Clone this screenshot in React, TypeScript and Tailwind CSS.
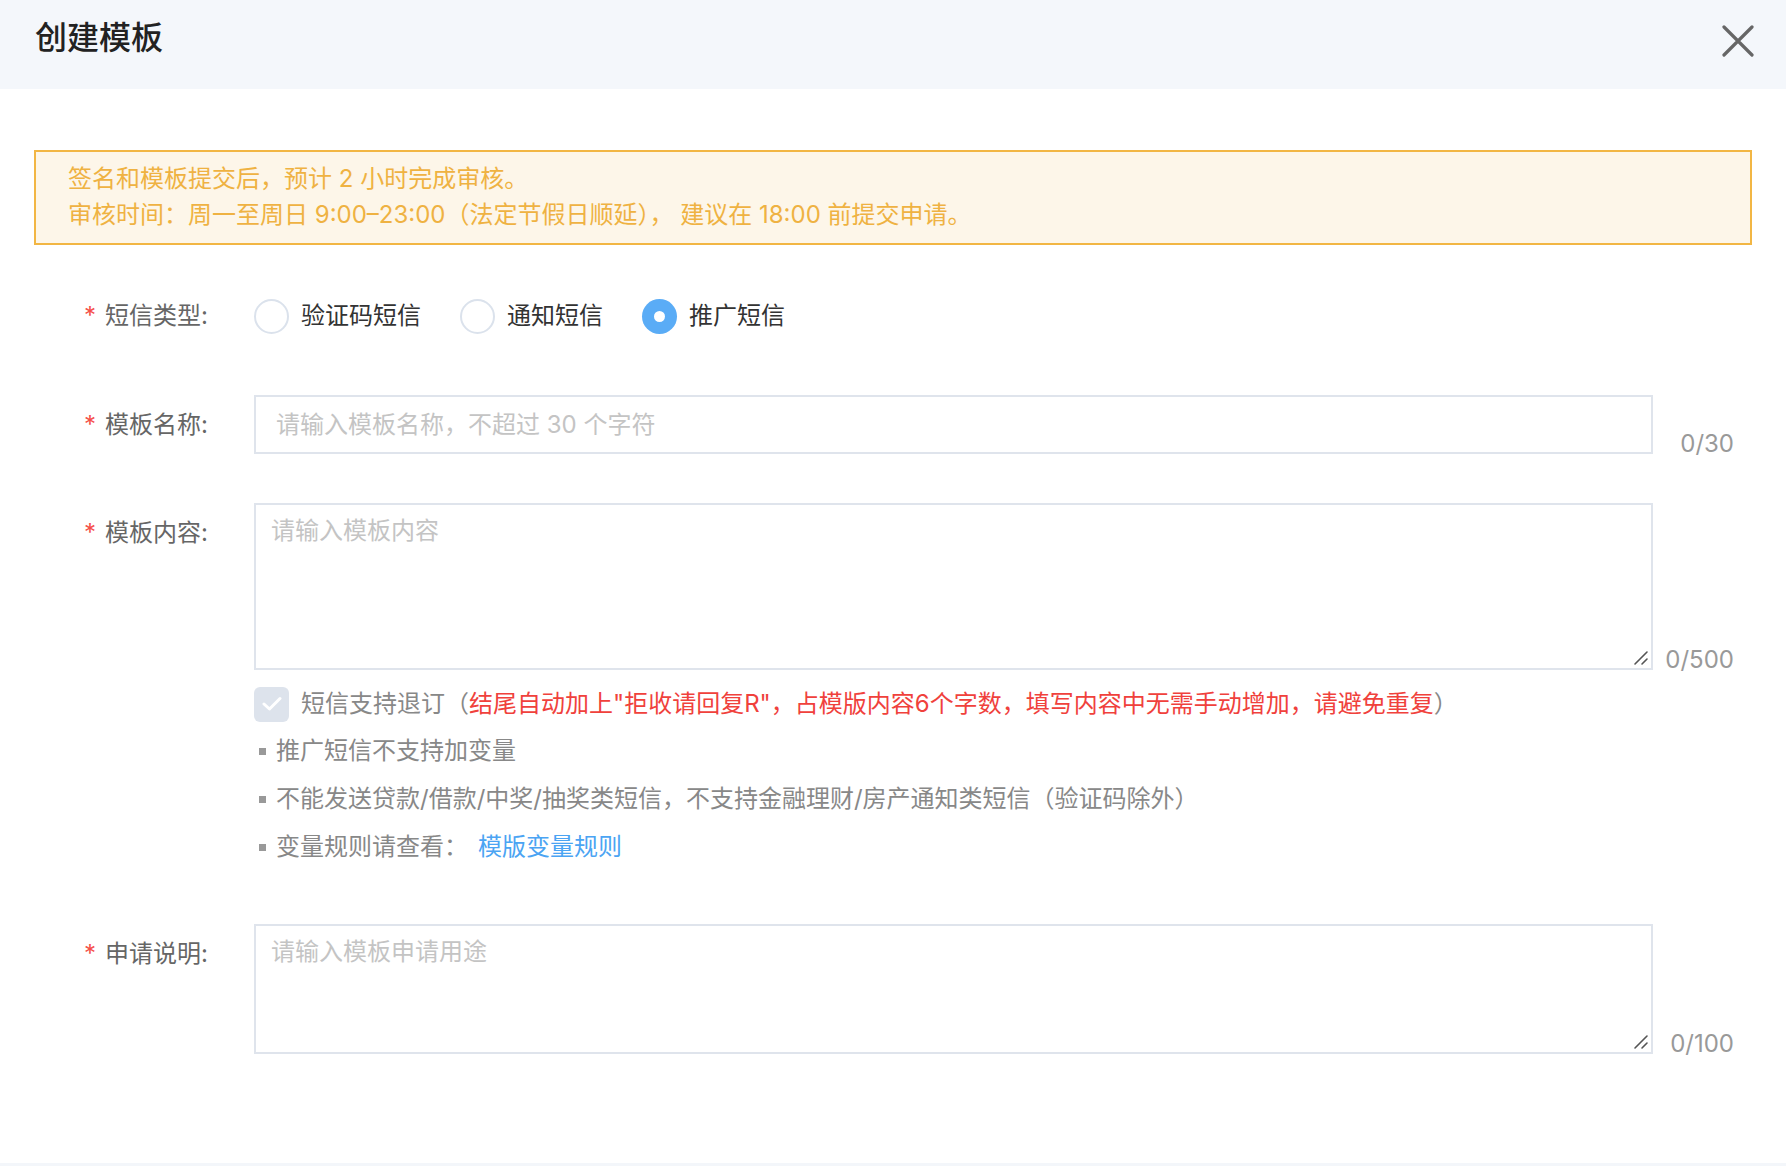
import { useState } from "react";

const FONT = "font-['Inter','Noto_Sans_CJK_SC',sans-serif]";

interface FieldRowProps {
  label: string;
  children: React.ReactNode;
  counter?: string;
  className?: string;
}

const Label = ({ label }: { label: string }) => (
  <div className="flex w-[170px] shrink-0 items-center gap-[9px] pt-[12px] text-[24px] leading-[36px] text-[#666]">
    <span className="text-[#f5504a]">*</span>
    <span>{label}:</span>
  </div>
);

const FieldRow = ({ label, children, counter, className = "" }: FieldRowProps) => (
  <div className={`flex items-start ${className}`}>
    <Label label={label} />
    <div className="flex-1">{children}</div>
    <div className="-mb-[2px] w-[81px] shrink-0 self-end text-right text-[24px] leading-none text-[#999]">
      {counter}
    </div>
  </div>
);

// textarea with the grip drawn the way the reference shows it
const Area = ({ placeholder, height }: { placeholder: string; height: string }) => (
  <div className="relative">
    <textarea
      placeholder={placeholder}
      className={`block ${height} w-full resize-none border-2 border-[#dfe4ec] px-[15px] pt-[8px] text-[24px] leading-[36px] text-[#333] outline-none placeholder:text-[#c4c4c4]`}
    />
    <svg className="absolute bottom-[4px] right-[4px]" width="16" height="16" viewBox="0 0 16 16" fill="none" stroke="#555" strokeWidth="1.6" strokeLinecap="round">
      <path d="M2 14 L14 2 M9 14 L14 9" />
    </svg>
  </div>
);

const Radio = ({ label, checked, onClick }: { label: string; checked: boolean; onClick: () => void }) => (
  <button onClick={onClick} className="mr-[39px] flex items-center gap-[12px]">
    {checked ? (
      <span className="flex h-[35px] w-[35px] items-center justify-center rounded-full bg-[#5aacf6]">
        <span className="h-[11px] w-[11px] rounded-full bg-white" />
      </span>
    ) : (
      <span className="h-[35px] w-[35px] rounded-full border-2 border-[#dbe2ec] bg-white" />
    )}
    <span className="text-[24px] leading-none text-[#333]">{label}</span>
  </button>
);

const Bullet = ({ children }: { children: React.ReactNode }) => (
  <div className="flex h-[48px] items-center text-[24px] text-[#888]">
    <span className="ml-[5px] mr-[10px] h-[7px] w-[7px] bg-[#999]" />
    {children}
  </div>
);

export default function App() {
  const [type, setType] = useState("promo");

  return (
    <div className={`flex min-h-[1166px] flex-col bg-white ${FONT}`}>
      {/* Header */}
      <div className="flex h-[89px] items-start justify-between bg-[#f4f7fb] pl-[35px] pr-[32px]">
        <h1 className="pt-[22px] text-[32px] leading-[32px] font-medium text-[#222]">创建模板</h1>
        <button className="mt-[25px]">
          <svg width="32" height="32" viewBox="0 0 32 32" fill="none" stroke="#666" strokeWidth="3.2" strokeLinecap="round">
            <path d="M2 2 L30 30 M30 2 L2 30" />
          </svg>
        </button>
      </div>

      {/* Notice */}
      <div className="px-[34px] pt-[61px]">
        <div className="h-[95px] border-2 border-[#f2b644] bg-[#fdf6e9] pl-[32px] pt-[9px] text-[24px] leading-[36px] text-[#efb242]">
          <p>签名和模板提交后，预计 2 小时完成审核。</p>
          <p>审核时间：周一至周日 9:00–23:00（法定节假日顺延）， 建议在 18:00 前提交申请。</p>
        </div>
      </div>

      {/* Form */}
      <div className="pl-[84px] pr-[52px]">
        <div className="mt-[53px] flex items-center">
          <div className="flex w-[170px] shrink-0 items-center gap-[9px] text-[24px] text-[#666]">
            <span className="text-[#f5504a]">*</span>
            <span>短信类型:</span>
          </div>
          <Radio label="验证码短信" checked={type === "code"} onClick={() => setType("code")} />
          <Radio label="通知短信" checked={type === "notice"} onClick={() => setType("notice")} />
          <Radio label="推广短信" checked={type === "promo"} onClick={() => setType("promo")} />
        </div>

        <FieldRow label="模板名称" counter="0/30" className="mt-[61px]">
          <input
            placeholder="请输入模板名称，不超过 30 个字符"
            className="block h-[59px] w-full border-2 border-[#dfe4ec] px-[20px] text-[24px] text-[#333] outline-none placeholder:text-[#c4c4c4]"
          />
        </FieldRow>

        <FieldRow label="模板内容" counter="0/500" className="mt-[49px]">
          <Area placeholder="请输入模板内容" height="h-[167px]" />
        </FieldRow>

        <div className="ml-[170px]">
          <div className="mt-[16px] flex items-center gap-[12px] text-[24px]">
            <span className="flex h-[35px] w-[35px] items-center justify-center rounded-[6px] bg-[#dde3ec]">
              <svg width="20" height="16" viewBox="0 0 20 16" fill="none" stroke="#fff" strokeWidth="3" strokeLinecap="round" strokeLinejoin="round">
                <path d="M2 8 L7.5 13 L18 2.5" />
              </svg>
            </span>
            <span className="text-[#888]">
              短信支持退订（
              <span className="text-[#f0413c]">结尾自动加上"拒收请回复R"，占模版内容6个字数，填写内容中无需手动增加，请避免重复</span>
              ）
            </span>
          </div>

          <div className="mt-[5px]">
            <Bullet>推广短信不支持加变量</Bullet>
            <Bullet>不能发送贷款/借款/中奖/抽奖类短信，不支持金融理财/房产通知类短信（验证码除外）</Bullet>
            <Bullet>
              变量规则请查看：
              <a href="#" className="ml-[10px] text-[#4ba4f3]">模版变量规则</a>
            </Bullet>
          </div>
        </div>

        <FieldRow label="申请说明" counter="0/100" className="mt-[53px]">
          <Area placeholder="请输入模板申请用途" height="h-[130px]" />
        </FieldRow>
      </div>

      <div className="flex-1" />
      <div className="h-[3px] bg-[#f3f6fa]" />
    </div>
  );
}
